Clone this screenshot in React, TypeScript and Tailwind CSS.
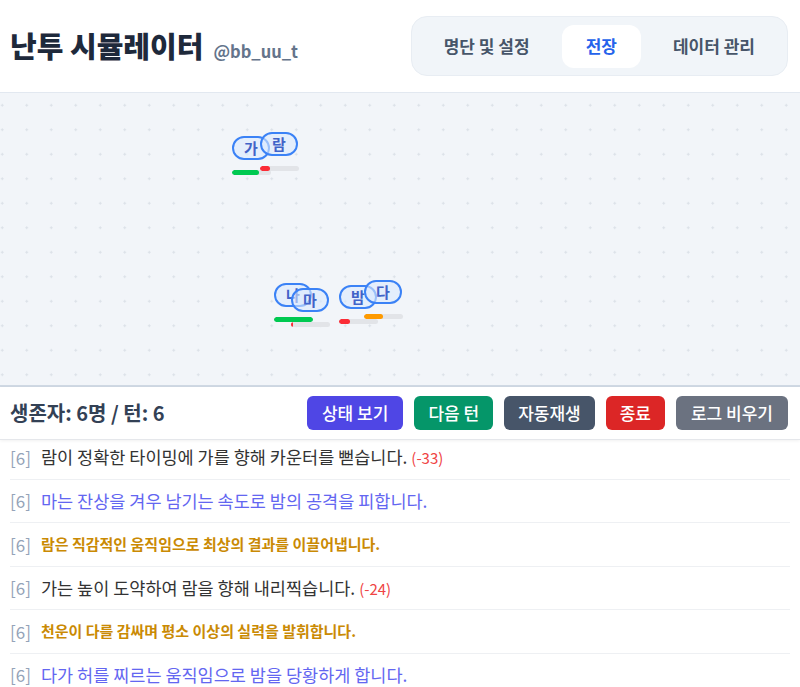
import React from 'react';

type Token = { name: string; x: number; y: number; hp: number; color: string };

const tokens: Token[] = [
  { name: '가', x: 232, y: 43, hp: 70, color: 'bg-green-500' },
  { name: '람', x: 260, y: 39, hp: 25, color: 'bg-red-500' },
  { name: '나', x: 274, y: 190, hp: 100, color: 'bg-green-500' },
  { name: '마', x: 291, y: 195, hp: 5, color: 'bg-red-500' },
  { name: '밤', x: 339, y: 192, hp: 28, color: 'bg-red-500' },
  { name: '다', x: 364, y: 187, hp: 48, color: 'bg-amber-500' },
];

type Log = { text: string; kind: 'normal' | 'skill' | 'luck'; dmg?: string };

const logs: Log[] = [
  { text: '람이 정확한 타이밍에 가를 향해 카운터를 뻗습니다.', kind: 'normal', dmg: '(-33)' },
  { text: '마는 잔상을 겨우 남기는 속도로 밤의 공격을 피합니다.', kind: 'skill' },
  { text: '람은 직감적인 움직임으로 최상의 결과를 이끌어냅니다.', kind: 'luck' },
  { text: '가는 높이 도약하여 람을 향해 내리찍습니다.', kind: 'normal', dmg: '(-24)' },
  { text: '천운이 다를 감싸며 평소 이상의 실력을 발휘합니다.', kind: 'luck' },
  { text: '다가 허를 찌르는 움직임으로 밤을 당황하게 합니다.', kind: 'skill' },
  { text: '밤은 몸을 낮추며 다의 공격을 흘려냅니다.', kind: 'skill' },
];

function Fighter({ t }: { t: Token }) {
  return (
    <div className="absolute flex flex-col" style={{ left: t.x, top: t.y }}>
      <div className="flex h-[24px] w-[38px] items-center justify-center rounded-full border-2 border-[#3b82f6] bg-[#dbeafe]/60 text-[15px] font-bold text-[#4163c8]">
        {t.name}
      </div>
      <div className="mt-[10px] h-[5px] w-[39px] overflow-hidden rounded-full bg-[#e2e4e8]">
        <div className={`h-full rounded-full ${t.color}`} style={{ width: `${t.hp}%` }} />
      </div>
    </div>
  );
}

export default function App() {
  return (
    <div className="min-h-screen bg-white font-['Noto_Sans_CJK_KR',sans-serif] text-[#333]">
      {/* header */}
      <header className="flex h-[93px] items-center justify-between border-b border-[#e2e8f0] pl-2.5 pr-3">
        <div className="flex items-baseline gap-2.5">
          <h1 className="text-[29px] font-black text-[#1e293b]">난투 시뮬레이터</h1>
          <span className="text-[16.5px] font-bold text-[#64748b]">@bb_uu_t</span>
        </div>
        <nav className="flex h-[60px] items-center gap-2 rounded-2xl border border-[#e8edf3] bg-[#f1f5f9] px-2">
          <button className="h-[43px] rounded-xl px-6 text-[17px] font-bold text-[#475569]">명단 및 설정</button>
          <button className="h-[43px] rounded-xl bg-white px-6 text-[17px] font-bold text-[#2563eb]">전장</button>
          <button className="h-[43px] rounded-xl px-6 text-[17px] font-bold text-[#475569]">데이터 관리</button>
        </nav>
      </header>

      {/* arena */}
      <div className="relative h-[294px] border-b-2 border-[#cfd8e3] bg-[#f2f5f9] bg-[radial-gradient(#dce1e8_1px,transparent_1.2px)] bg-[size:24.5px_24.5px] bg-[position:-10px_0px]">
        {tokens.map((t) => (
          <Fighter key={t.name} t={t} />
        ))}
      </div>

      {/* controls */}
      <div className="relative z-10 flex h-[53px] items-center justify-between border-b border-[#e5e7eb] bg-white pl-2.5 pr-3 shadow-[0_1px_3px_rgba(0,0,0,0.06)]">
        <div className="text-[20px] font-bold text-[#334155]">생존자: 6명 / 턴: 6</div>
        <div className="flex gap-[11px]">
          <button className="h-[34px] rounded-md bg-[#4f46e5] px-[15px] text-[17px] font-medium text-white">상태 보기</button>
          <button className="h-[34px] rounded-md bg-[#059669] px-[14px] text-[17px] font-medium text-white">다음 턴</button>
          <button className="h-[34px] rounded-md bg-[#475569] px-[14px] text-[17px] font-medium text-white">자동재생</button>
          <button className="h-[34px] rounded-md bg-[#dc2626] px-[14px] text-[17px] font-medium text-white">종료</button>
          <button className="h-[34px] rounded-md bg-[#6b7280] px-[15px] text-[17px] font-medium text-white">로그 비우기</button>
        </div>
      </div>

      {/* log */}
      <div className="overflow-hidden px-2.5">
        <div className="-mt-[4px]">
          {logs.map((l, i) => (
            <div key={i} className="flex h-[43.5px] items-center border-b border-[#eef0f3]">
              <span className="mr-[10px] text-[17px] text-[#94a3b8]">[6]</span>
              {l.kind === 'normal' && (
                <span className="text-[17.5px] text-[#333]">
                  {l.text} <span className="text-[15px] text-[#ef4444]">{l.dmg}</span>
                </span>
              )}
              {l.kind === 'skill' && <span className="text-[17.5px] text-[#6366f1]">{l.text}</span>}
              {l.kind === 'luck' && <span className="text-[15px] font-bold text-[#ca8a04]">{l.text}</span>}
            </div>
          ))}
        </div>
      </div>
    </div>
  );
}
